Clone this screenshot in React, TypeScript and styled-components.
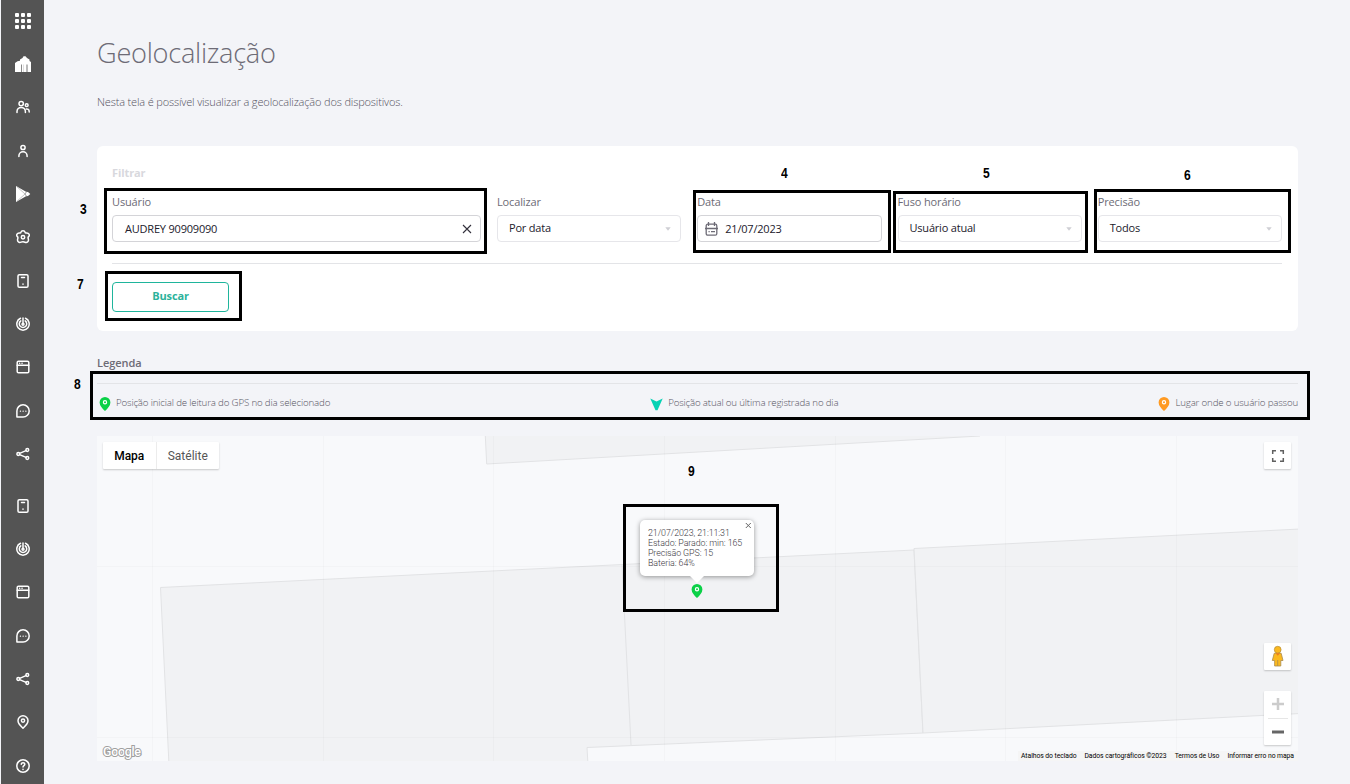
import React from "react";
import styled, { createGlobalStyle } from "styled-components";

const Global = createGlobalStyle`
  * { box-sizing: border-box; }
  body { margin: 0; background: #f3f4f8; font-family: "Open Sans", sans-serif; color: #6d6b76; overflow: hidden; }
`;

const Page = styled.div`
  position: relative;
  display: flex;
  width: 1350px;
  height: 784px;
  overflow: hidden;
  background: #f3f4f8;
`;

const Sidebar = styled.nav`
  flex: none;
  width: 43px;
  height: 784px;
  margin-left: 1px;
  background: #545454;
  overflow: hidden;
`;

const NavGroup = styled.div<{ $gap: number }>`
  display: flex;
  flex-direction: column;
  margin-top: ${(p) => p.$gap}px;
`;

const NavItem = styled.a`
  display: flex;
  align-items: center;
  justify-content: center;
  height: 43.33px;
  padding-left: 1px;
  color: #fff;
  svg { display: block; }
`;

const Main = styled.main`
  display: flex;
  flex-direction: column;
  width: 1201px;
  margin-left: 53px;
`;

const Title = styled.h1`
  margin: 33px 0 0;
  height: 40px;
  font-size: 27.2px;
  line-height: 40px;
  font-weight: 300;
  letter-spacing: -0.27px;
`;

const Intro = styled.p`
  margin: 19px 0 0;
  height: 20px;
  line-height: 20px;
  font-size: 11px;
  font-weight: 300;
  letter-spacing: -0.15px;
  color: #55535f;
`;

const Card = styled.section`
  height: 185px;
  margin-top: 34px;
  padding: 19px 16px 0 15px;
  background: #fff;
  border-radius: 6px;
`;

const CardTitle = styled.h2`
  margin: 0;
  height: 16px;
  line-height: 16px;
  font-size: 11px;
  font-weight: 700;
  letter-spacing: -0.1px;
  color: #d8d8dd;
`;

const Fields = styled.div`
  display: grid;
  grid-template-columns: 369px repeat(4, minmax(0, 1fr));
  column-gap: 16px;
  height: 69px;
  margin-top: 13px;
`;

const Field = styled.div`
  display: flex;
  flex-direction: column;
`;

const Label = styled.label`
  height: 16px;
  margin-bottom: 5px;
  line-height: 16px;
  font-size: 11px;
  letter-spacing: -0.14px;
`;

const Control = styled.div<{ $strong?: boolean; $pad: number }>`
  display: flex;
  align-items: center;
  height: 27px;
  padding: 0 8px 0 ${(p) => p.$pad}px;
  border: 1px solid ${(p) => (p.$strong ? "#d4d4d8" : "#e6e6ea")};
  border-radius: 4px;
  font-size: 11px;
  line-height: 25px;
  letter-spacing: -0.2px;
  color: #22202c;
  svg { flex: none; }
`;

const CalendarIcon = styled.svg`
  margin-right: 7px;
`;

const Value = styled.span<{ $up?: boolean }>`
  flex: 1;
  padding-bottom: ${(p) => (p.$up ? 2 : 0)}px;
`;

const Divider = styled.hr`
  width: 100%;
  height: 1px;
  margin: 0;
  border: 0;
  background: #e3e4e7;
`;

const SearchButton = styled.button`
  display: block;
  width: 117px;
  height: 30px;
  margin-top: 18px;
  padding: 0 0 3px;
  border: 1px solid #1fb59c;
  border-radius: 4px;
  background: #fff;
  color: #2bb29b;
  font: 700 11px "Open Sans", sans-serif;
  letter-spacing: -0.15px;
`;

const LegendTitle = styled.h3`
  margin: 24px 0 12px;
  height: 16px;
  line-height: 16px;
  font-size: 11px;
  font-weight: 600;
  letter-spacing: -0.05px;
`;

const Legend = styled.div`
  display: flex;
  justify-content: space-between;
  height: 52px;
  padding: 11px 0 0 2px;
`;

const LegendItem = styled.div`
  display: flex;
  align-items: flex-start;
  gap: 5px;
  height: 20px;
  font-size: 9.7px;
  line-height: 16px;
  font-weight: 300;
  letter-spacing: -0.16px;
  color: #55535f;
  white-space: nowrap;
  svg { margin-top: 2px; }
`;

const MapArea = styled.section`
  position: relative;
  height: 325px;
  background: #f8f9fb;
  font-family: Roboto, sans-serif;
`;

const Terrain = styled.svg`
  position: absolute;
  inset: 0;
`;

const Brand = styled.svg`
  position: absolute;
  left: 0;
  bottom: 0;
`;

const MapTypes = styled.div`
  position: absolute;
  left: 6px;
  top: 6px;
  display: flex;
  height: 27px;
  background: #fff;
  border-radius: 1px;
  box-shadow: 0 1px 2px rgba(0, 0, 0, 0.2);
`;

const MapType = styled.span<{ $active?: boolean; $w: number }>`
  width: ${(p) => p.$w}px;
  text-align: center;
  line-height: 28px;
  font-size: 12px;
  font-weight: ${(p) => (p.$active ? 500 : 400)};
  color: ${(p) => (p.$active ? "#000" : "#565656")};
  border-left: ${(p) => (p.$active ? "0" : "1px solid #ececec")};
`;

const MapButton = styled.div<{ $top: number; $h: number }>`
  position: absolute;
  right: 7px;
  top: ${(p) => p.$top}px;
  width: 27px;
  height: ${(p) => p.$h}px;
  background: #fff;
  border-radius: 1px;
  box-shadow: 0 1px 2px rgba(0, 0, 0, 0.2);
  svg { display: block; }
`;

const Credits = styled.div`
  position: absolute;
  right: 0;
  bottom: 0;
  display: flex;
  gap: 8px;
  height: 10px;
  padding: 0 4px 0 3px;
  background: #f5f5f5;
  color: #000;
  font-size: 6.8px;
  line-height: 10px;
  letter-spacing: -0.065px;
  white-space: nowrap;
`;

const Bubble = styled.div`
  position: absolute;
  left: 543px;
  top: 84px;
  width: 114px;
  height: 56px;
  padding: 8px 0 0 8px;
  background: #fff;
  border-radius: 5px;
  box-shadow: 0 1px 5px rgba(0, 0, 0, 0.4);
  font-size: 8.9px;
  line-height: 10px;
  font-weight: 300;
  letter-spacing: -0.09px;
  color: #3c3a43;
  white-space: nowrap;
  &::after {
    content: "";
    position: absolute;
    left: 50px;
    top: 56px;
    border: 7px solid transparent;
    border-top-color: #fff;
    border-bottom: 0;
  }
  div { height: 10px; }
  svg { position: absolute; right: 2px; top: 2px; }
`;

const Marker = styled.span`
  position: absolute;
  left: 594px;
  top: 148px;
  svg { display: block; }
`;

const Outline = styled.div<{ $x: number; $y: number; $w: number; $h: number }>`
  position: absolute;
  left: ${(p) => p.$x}px;
  top: ${(p) => p.$y}px;
  width: ${(p) => p.$w}px;
  height: ${(p) => p.$h}px;
  border: 3px solid #000;
`;

const Callout = styled.span<{ $x: number; $y: number }>`
  position: absolute;
  left: ${(p) => p.$x}px;
  top: ${(p) => p.$y}px;
  font: 700 14.4px/14px "Liberation Sans", sans-serif;
  color: #000;
  transform: scaleX(0.84);
  transform-origin: left;
`;

const Line = ({ children }: { children: React.ReactNode }) => (
  <svg width="14" height="14" viewBox="0 0 14 14" fill="none" stroke="#fff" strokeWidth="1.5" strokeLinecap="round" strokeLinejoin="round">
    {children}
  </svg>
);

const AppsIcon = () => (
  <svg width="16" height="16" viewBox="0 0 16 16" fill="#fff">
    {[0, 6, 12].map((y) => [0, 6, 12].map((x) => <rect key={`${x}-${y}`} x={x} y={y} width="4" height="4" rx="1" />))}
  </svg>
);
const HomeIcon = () => (
  <svg width="16" height="16" viewBox="0 0 16 16">
    <path d="M0 16V7L2.500 5.300 5 4.800V3.500L7.500 2 8.500.3h2L12 2l2.500 1.500V5L16 6v10z" fill="#fff" />
    <path d="M6.500 16V8.500" stroke="#8a8a8a" strokeWidth="1" />
    <path d="M8.500 16V8.500" stroke="#ddd" strokeWidth="1" />
    <path d="M12 16V8.500" stroke="#8a8a8a" strokeWidth="1.200" />
  </svg>
);
const UsersIcon = () => (
  <Line>
    <circle cx="5.200" cy="3.600" r="2.200" />
    <path d="M1 12.400v-.8a4.200 4.200 0 0 1 8.400 0v.8" />
    <circle cx="10.700" cy="5.200" r="1.400" />
    <path d="M10.300 8.900c1.900-.2 2.900 1 2.900 3.200" />
  </Line>
);
const UserIcon = () => (
  <Line>
    <circle cx="7" cy="3.500" r="2.100" />
    <path d="M2.900 12.500v-.6a4.100 4.100 0 0 1 8.200 0v.6" />
  </Line>
);
const PlayIcon = () => (
  <svg width="16" height="16" viewBox="0 0 16 16">
    <path d="M1 0L11 5.800 13 6 15.300 8 13 10 11 10.200 1 16z" fill="#fff" />
    <path d="M2 .8L10 8 2 15.200" fill="none" stroke="#aaa" strokeWidth=".7" />
    <path d="M11.300 6L10 8l1.300 2" fill="none" stroke="#888" strokeWidth=".8" />
  </svg>
);
const GearIcon = () => (
  <Line>
    <path d="M5 2.200C5.400.3 8.600.3 9 2.200Q9.200 3.200 10.300 3.100C12.900 2.700 14.100 5.200 12.600 6.600Q11.800 7.500 12.200 8.600C13.200 11.400 11.100 13.200 9 12.200Q7 11.200 5 12.200C2.900 13.200.8 11.400 1.800 8.600Q2.200 7.500 1.400 6.600C-.1 5.200 1.100 2.700 3.700 3.100Q4.800 3.200 5 2.200z" />
    <circle cx="7" cy="7.300" r="1.700" />
  </Line>
);
const DeviceIcon = () => (
  <Line>
    <rect x="2" y=".8" width="10" height="12.400" rx="1.300" />
    <path d="M5.500 3.500h3M7 9.900v.3" />
  </Line>
);
const RadarIcon = () => (
  <Line>
    <path d="M7 7V.9M9.500 1.300A6.200 6.200 0 1 1 4.500 1.300M9.200 3.900a3.700 3.700 0 1 1-4.400 0" />
    <circle cx="7" cy="7.200" r="1" />
  </Line>
);
const WindowIcon = () => (
  <Line>
    <rect x="1.200" y="1.200" width="11.600" height="11.600" rx="1.300" />
    <path d="M1.200 5.200h11.600M3.600 3.200h.1M6 3.200h.1" />
  </Line>
);
const ChatIcon = () => (
  <Line>
    <path d="M.9 13.100V7A6.150 6.150 0 1 1 7 13.100z" />
    <path d="M4.400 7.200h.1M7.100 7.200h.1M9.800 7.200h.1" strokeWidth="1.300" />
  </Line>
);
const ShareIcon = () => (
  <Line>
    <circle cx="2.300" cy="7" r="1.400" />
    <circle cx="11.300" cy="3" r="1.400" />
    <circle cx="11.300" cy="11" r="1.400" />
    <path d="M3.600 6.400L10 3.600M3.600 7.600l6.400 2.800" />
  </Line>
);
const PlaceIcon = () => (
  <Line>
    <path d="M7 13.300C4.500 11 2 8.600 2 5.800a5 5 0 0 1 10 0c0 2.800-2.500 5.200-5 7.500z" />
    <circle cx="7" cy="5.600" r="1.600" />
  </Line>
);
const HelpIcon = () => (
  <Line>
    <circle cx="7" cy="7" r="6.200" />
    <path d="M5.300 5.300c0-2.200 3.500-2.200 3.500 0C8.800 6.600 7 6.600 7 8M7 10.300v.1" />
  </Line>
);

const Pin = ({ color }: { color: string }) => (
  <svg width="12" height="14" viewBox="0 0 12 14">
    <path d="M6 14C3.500 11.500.6 8.700.6 5.400a5.400 5.400 0 0 1 10.800 0C11.400 8.700 8.500 11.500 6 14z" fill={color} />
    <circle cx="6" cy="5.300" r="1.600" fill="none" stroke="#fff" strokeWidth="1.200" />
  </svg>
);

const Caret = () => (
  <svg width="7" height="4" viewBox="0 0 7 4"><path d="M.3.300h5.400L3 3.700z" fill="#cfcfd4" /></svg>
);

const primaryNav = [AppsIcon, HomeIcon, UsersIcon, UserIcon, PlayIcon, GearIcon, DeviceIcon, RadarIcon, WindowIcon, ChatIcon, ShareIcon];
const secondaryNav = [DeviceIcon, RadarIcon, WindowIcon, ChatIcon, ShareIcon, PlaceIcon, HelpIcon];

const Select = ({ label, value }: { label: string; value: string }) => (
  <Field>
    <Label>{label}</Label>
    <Control $pad={11}>
      <Value $up>{value}</Value>
      <Caret />
    </Control>
  </Field>
);

const outlines = [
  [104, 188, 383, 66],
  [693, 190, 198, 63],
  [893, 191, 195, 62],
  [1094, 189, 197, 64],
  [105, 271, 137, 50],
  [90, 371, 1220, 49],
  [623, 504, 156, 108],
];
const callouts: [string, number, number][] = [
  ["3", 80, 202], ["4", 781, 166], ["5", 983, 166], ["6", 1184, 168], ["7", 77, 277], ["8", 74, 377], ["9", 688, 464],
];

export default function App() {
  return (
    <>
      <Global />
      <Page>
        <Sidebar>
          <NavGroup $gap={-1}>{primaryNav.map((Icon, i) => <NavItem key={i}><Icon /></NavItem>)}</NavGroup>
          <NavGroup $gap={8.5}>{secondaryNav.map((Icon, i) => <NavItem key={i}><Icon /></NavItem>)}</NavGroup>
        </Sidebar>
        <Main>
          <Title>Geolocalização</Title>
          <Intro>Nesta tela é possível visualizar a geolocalização dos dispositivos.</Intro>
          <Card>
            <CardTitle>Filtrar</CardTitle>
            <Fields>
              <Field>
                <Label>Usuário</Label>
                <Control $strong $pad={12}>
                  <Value>AUDREY 90909090</Value>
                  <svg width="10" height="10" viewBox="0 0 10 10" stroke="#33313c" strokeWidth="1.100"><path d="M1 1l8 8M9 1L1 9" /></svg>
                </Control>
              </Field>
              <Select label="Localizar" value="Por data" />
              <Field>
                <Label>Data</Label>
                <Control $strong $pad={7}>
                  <CalendarIcon width="13" height="14" viewBox="0 0 13 14" fill="none" stroke="#6d6b76" strokeWidth="1.300">
                    <rect x="1.200" y="2.200" width="10.600" height="11" rx="1.500" />
                    <path d="M3.500 0v4M9.500 0v4M0 6.500h13M3.500 9.700h1.200M6 9.700h4" />
                  </CalendarIcon>
                  <Value>21/07/2023</Value>
                </Control>
              </Field>
              <Select label="Fuso horário" value="Usuário atual" />
              <Select label="Precisão" value="Todos" />
            </Fields>
            <Divider />
            <SearchButton>Buscar</SearchButton>
          </Card>
          <LegendTitle>Legenda</LegendTitle>
          <Divider />
          <Legend>
            <LegendItem><Pin color="#0bd147" />Posição inicial de leitura do GPS no dia selecionado</LegendItem>
            <LegendItem>
              <svg width="13" height="14" viewBox="0 0 13 14"><path d="M.3 1.500L6.500 4.500 12.700 1.500 7.500 13.300h-2z" fill="#06d2b4" /></svg>
              Posição atual ou última registrada no dia
            </LegendItem>
            <LegendItem><Pin color="#ff9a22" />Lugar onde o usuário passou</LegendItem>
          </Legend>
          <MapArea>
            <Terrain width="1201" height="325" viewBox="97 436 1201 325">
              <g fill="#f1f2f4" stroke="#e2e3e5" strokeWidth="1">
                <path d="M485 430L486.700 464 980 436V430z" />
                <path d="M160.500 587.500L914 550 923 733 587 747.500 588 765H169z" />
                <path d="M914 548.500L1300 529V713.500L923 733z" />
                <path d="M622 565L631 745" />
              </g>
              <path d="M152.500 436v325M323.500 436v325M493.500 436v325M664.500 436v325M835.500 436v325M1005.500 436v325M1176.500 436v325M97 566.500h1201M97 737.500h1201" stroke="#000" strokeOpacity=".018" />
            </Terrain>
            <MapTypes>
              <MapType $active $w={52.5}>Mapa</MapType>
              <MapType $w={63.5}>Satélite</MapType>
            </MapTypes>
            <MapButton $top={6} $h={27}>
              <svg width="27" height="27" viewBox="0 0 27 27" fill="none" stroke="#606060" strokeWidth="1.500"><path d="M8.700 12V8.700H12M16 8.700h3.300V12M19.300 16v3.300H16M12 19.300H8.700V16" /></svg>
            </MapButton>
            <MapButton $top={207} $h={27}>
              <svg width="27" height="27" viewBox="0 0 27 27">
                <path d="M10.200 10.300h7l1.800 7.200h-2.200V23h-6.200v-5.500H8.300z" fill="#fbb91f" stroke="#a98b50" strokeWidth=".8" />
                <circle cx="13.700" cy="6.700" r="3.400" fill="#fbb91f" stroke="#b58d3a" strokeWidth=".7" />
                <path d="M11.500 10.300h4.600l-2.300 2.500z" fill="#ee7d1b" />
                <path d="M13.700 17v6" stroke="#a98b50" strokeWidth=".8" />
              </svg>
            </MapButton>
            <MapButton $top={255} $h={54}>
              <svg width="27" height="54" viewBox="0 0 27 54">
                <path d="M8 13h12M14 7v12" stroke="#ccc" strokeWidth="2.500" />
                <path d="M4 27.500h20" stroke="#e6e6e6" />
                <path d="M8 41h12" stroke="#666" strokeWidth="3" />
              </svg>
            </MapButton>
            <Brand width="50" height="20">
              <text x="6" y="15" fontFamily="Roboto, sans-serif" fontSize="12.500" fontWeight="500" textLength="38" fill="#fff" stroke="#a0a0a0" strokeWidth="2" paintOrder="stroke">Google</text>
            </Brand>
            <Credits>
              <span>Atalhos do teclado</span>
              <span>Dados cartográficos ©2023</span>
              <span>Termos de Uso</span>
              <span>Informar erro no mapa</span>
            </Credits>
            <Bubble>
              <div>21/07/2023, 21:11:31</div>
              <div>Estado: Parado: min: 165</div>
              <div>Precisão GPS: 15</div>
              <div>Bateria: 64%</div>
              <svg width="7" height="7" viewBox="0 0 7 7" stroke="#666"><path d="M.8 1l5 5M5.800 1l-5 5" /></svg>
            </Bubble>
            <Marker><Pin color="#0bd147" /></Marker>
          </MapArea>
        </Main>
        {outlines.map(([x, y, w, h]) => <Outline key={`${x}-${y}`} $x={x} $y={y} $w={w} $h={h} />)}
        {callouts.map(([n, x, y]) => <Callout key={n} $x={x} $y={y}>{n}</Callout>)}
      </Page>
    </>
  );
}
